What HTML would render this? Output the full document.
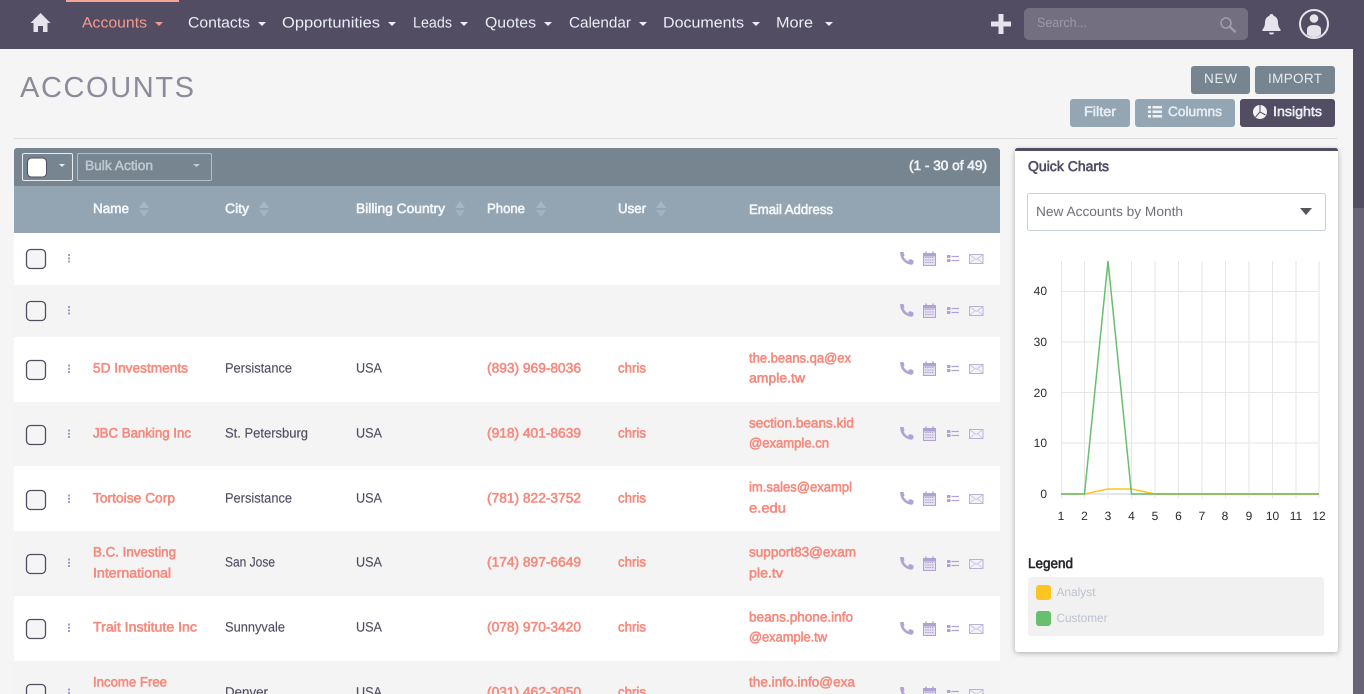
<!DOCTYPE html>
<html lang="en"><head><meta charset="utf-8"><title>Accounts</title>
<style>
html,body{margin:0;padding:0;width:1364px;height:694px;overflow:hidden;background:#f5f5f5}
svg{display:block}
text{font-family:"Liberation Sans",sans-serif;font-size:14px;text-rendering:geometricPrecision}
.nav{font-size:15px;fill:#e9edf5}
.th{font-size:13.5px;fill:#f4f7f9;stroke:#f4f7f9;stroke-width:.6px}
.lnk{font-size:13.5px;fill:#f58a7e;stroke:#f58a7e;stroke-width:.6px}
.td{font-size:13.5px;fill:#534d64;stroke:#534d64;stroke-width:.15px}
.btn{font-size:13.5px;fill:#e6ecf0}
.btb{font-size:13.5px;fill:#e6ecf0;stroke:#e6ecf0;stroke-width:.55px}
.ax{font-size:12px;fill:#2a2a2a}
</style></head><body>
<svg width="1364" height="694" viewBox="0 0 1364 694" xmlns="http://www.w3.org/2000/svg">
<defs>
<path id="car" d="M0 0h8l-4 4z"/>
<g id="sort" fill="#a9b6c2"><path d="M0 7L5 0l5 7z"/><path d="M0 9h10L5 16z" fill="#a5b2be"/></g>
<g id="acts">
 <path d="M901.5 -4.5C902 1 906 5 911.5 5.5" fill="none" stroke="#b0a3d3" stroke-width="2.6" stroke-linecap="round"/>
 <path d="M900 -6h3.5l1 3.500-2 1.500zM908 2.500l2-1.500 3.500 1.500v3h-2.500z" fill="#b0a3d3"/>
 <rect x="923.500" y="-4.500" width="12" height="12" fill="#e6e1f1" stroke="#b0a3d3"/>
 <rect x="923" y="-5" width="13" height="3.500" fill="#b0a3d3"/>
 <path d="M926 -6.500v2M933 -6.500v2" stroke="#b0a3d3" stroke-width="1.500"/>
 <path d="M925 -.5h9M925 2h9M925 4.500h9" stroke="#b0a3d3" stroke-dasharray="1.500 .8"/>
 <rect x="947" y="-3" width="3.500" height="3" fill="#b0a3d3"/><rect x="947" y="1" width="3.500" height="3" fill="#b0a3d3"/>
 <path d="M951.500 -1.500h7.500M951.500 2.500h7.500" stroke="#b0a3d3" stroke-width="1.200"/>
 <rect x="969.500" y="-3.500" width="13.500" height="9" fill="#f4f2f9" stroke="#bcb0da"/>
 <path d="M970 -3l6.300 4.500L982.500 -3M970 5l4.500-4M982.500 5l-4.500-4" fill="none" stroke="#c8bee0" stroke-width=".8"/>
</g>
<g id="dots" fill="#a598cf"><rect x="68" y="-4.500" width="2" height="2"/><rect x="68" y="-1.200" width="2" height="2"/><rect x="68" y="2" width="2" height="2"/></g>
<rect id="cb" x="26.500" y="-9.500" width="19" height="19" rx="4" fill="#f5f5f5" stroke="#534d64" stroke-width="1.300"/>
</defs>

<!-- page -->
<rect width="1364" height="694" fill="#f5f5f5"/>
<rect x="1353" y="49" width="11" height="159" fill="#534d64"/>
<rect x="1353" y="208" width="11" height="486" fill="#686376"/>

<!-- top nav -->
<g>
<rect width="1364" height="49" fill="#534d64"/>
<rect x="66" width="113" height="2" fill="#f4a597"/>
<path d="M40.500 13L50.500 23H47.500V32H43V26H38V32H33.500V23H30.500z" fill="#e6e4ea"/>
<text x="82" y="27.500" class="nav" style="fill:#f39a8d" textLength="65" lengthAdjust="spacingAndGlyphs">Accounts</text>
<use href="#car" x="155" y="22" fill="#f39a8d"/>
<text x="188" y="27.500" class="nav" textLength="62" lengthAdjust="spacingAndGlyphs">Contacts</text>
<use href="#car" x="258" y="22" fill="#e9edf5"/>
<text x="282" y="27.500" class="nav" textLength="98" lengthAdjust="spacingAndGlyphs">Opportunities</text>
<use href="#car" x="388" y="22" fill="#e9edf5"/>
<text x="413" y="27.500" class="nav" textLength="39" lengthAdjust="spacingAndGlyphs">Leads</text>
<use href="#car" x="460" y="22" fill="#e9edf5"/>
<text x="485" y="27.500" class="nav" textLength="51" lengthAdjust="spacingAndGlyphs">Quotes</text>
<use href="#car" x="544" y="22" fill="#e9edf5"/>
<text x="569" y="27.500" class="nav" textLength="62" lengthAdjust="spacingAndGlyphs">Calendar</text>
<use href="#car" x="639" y="22" fill="#e9edf5"/>
<text x="663" y="27.500" class="nav" textLength="81" lengthAdjust="spacingAndGlyphs">Documents</text>
<use href="#car" x="752" y="22" fill="#e9edf5"/>
<text x="776" y="27.500" class="nav" textLength="37" lengthAdjust="spacingAndGlyphs">More</text>
<use href="#car" x="825" y="22" fill="#e9edf5"/>
<path d="M998.500 14h5v7.500h7.500v5h-7.500V34h-5v-7.500H991v-5h7.500z" fill="#e6e4ea"/>
<rect x="1024" y="8" width="224" height="32" rx="5" fill="#736e80"/>
<text x="1037" y="27" style="font-size:13.5px;fill:#9d99a7" textLength="50" lengthAdjust="spacingAndGlyphs">Search...</text>
<circle cx="1226" cy="23" r="5" fill="none" stroke="#a09ca9" stroke-width="1.600"/>
<path d="M1230 27l5 4.500" stroke="#a09ca9" stroke-width="2.400" stroke-linecap="round"/>
<path d="M1271.500 14c1.300 0 2 .8 2 1.800 3 1 4.500 3.500 4.500 6.700 0 3 .8 5 2.500 7v1.500h-18v-1.500c1.700-2 2.500-4 2.500-7 0-3.200 1.500-5.700 4.500-6.700 0-1 .7-1.800 2-1.800z" fill="#e6e4ea"/>
<path d="M1269 32.500h5c0 1.200-1 2-2.500 2s-2.500-.8-2.500-2z" fill="#e6e4ea"/>
<circle cx="1314" cy="24" r="14" fill="none" stroke="#e6e4ea" stroke-width="2"/>
<circle cx="1314" cy="18.500" r="4.300" fill="#e6e4ea"/>
<path d="M1307 34.500v-5c0-3 2.700-4.500 7-4.500s7 1.500 7 4.500v5c-2 1.500-4.400 2.500-7 2.500s-5-1-7-2.500z" fill="#e6e4ea"/>
</g>

<!-- title + actions -->
<g>
<text x="20" y="97" style="font-size:29px;fill:#8b8b9c" textLength="174" lengthAdjust="spacing">ACCOUNTS</text>
<rect x="1191" y="66" width="59" height="28" rx="3" fill="#778591"/>
<text x="1204" y="83" class="btn" textLength="33" lengthAdjust="spacing">NEW</text>
<rect x="1255" y="66" width="80" height="28" rx="3" fill="#778591"/>
<text x="1268" y="83" class="btn" textLength="54" lengthAdjust="spacing">IMPORT</text>
<rect x="1070" y="99" width="60" height="28" rx="3" fill="#94a6b4"/>
<text x="1084" y="116" class="btb" textLength="32" lengthAdjust="spacingAndGlyphs">Filter</text>
<rect x="1135" y="99" width="100" height="28" rx="3" fill="#94a6b4"/>
<path d="M1148 106h3v2.500h-3zM1148 110.500h3v2.500h-3zM1148 115h3v2.500h-3zM1152.500 106h9.500v2.500h-9.500zM1152.500 110.500h9.500v2.500h-9.500zM1152.500 115h9.500v2.500h-9.500z" fill="#eef2f5"/>
<text x="1168" y="116" class="btb" textLength="54" lengthAdjust="spacingAndGlyphs">Columns</text>
<rect x="1240" y="99" width="95" height="28" rx="3" fill="#534d64"/>
<circle cx="1260" cy="112" r="7" fill="#f2f1f4"/>
<path d="M1260 105v7l5.500 3M1260 112l-4.500 5" fill="none" stroke="#534d64" stroke-width="1"/>
<text x="1273" y="116" class="btb" textLength="49" lengthAdjust="spacingAndGlyphs">Insights</text>
<rect x="14" y="138" width="1323" height="1" fill="#dcdcdc"/>
</g>

<!-- table toolbar -->
<g>
<path d="M14 186V151a3 3 0 0 1 3-3H997a3 3 0 0 1 3 3V186z" fill="#778591"/>
<rect x="22.500" y="153.500" width="50" height="27" rx="1.500" fill="none" stroke="#e8ecef"/>
<rect x="27.500" y="158" width="19" height="19" rx="4" fill="#fff" stroke="#534d64"/>
<path d="M59 164h6l-3 3z" fill="#e8ecef"/>
<rect x="77.500" y="153.500" width="134" height="27" rx="1.500" fill="none" stroke="#b5bfc6"/>
<text x="85" y="170" style="font-size:13.5px;fill:#bfc8ce;stroke:#bfc8ce;stroke-width:.5px" textLength="68" lengthAdjust="spacingAndGlyphs">Bulk Action</text>
<path d="M193 164h7l-3.500 3z" fill="#c5cdd3"/>
<text x="909" y="170" style="font-size:13.5px;fill:#f2f5f7;stroke:#f2f5f7;stroke-width:.6px" textLength="78" lengthAdjust="spacingAndGlyphs">(1 - 30 of 49)</text>
</g>

<!-- table head -->
<g>
<rect x="14" y="186" width="986" height="47" fill="#93a4b3"/>
<text x="93" y="213" class="th" textLength="36" lengthAdjust="spacingAndGlyphs">Name</text><use href="#sort" x="139" y="201"/>
<text x="225" y="213" class="th" textLength="24" lengthAdjust="spacingAndGlyphs">City</text><use href="#sort" x="259" y="201"/>
<text x="356" y="213" class="th" textLength="89" lengthAdjust="spacingAndGlyphs">Billing Country</text><use href="#sort" x="455" y="201"/>
<text x="487" y="213" class="th" textLength="38" lengthAdjust="spacingAndGlyphs">Phone</text><use href="#sort" x="536" y="201"/>
<text x="618" y="213" class="th" textLength="28" lengthAdjust="spacingAndGlyphs">User</text><use href="#sort" x="656" y="201"/>
<text x="749" y="214" class="th" textLength="84" lengthAdjust="spacingAndGlyphs">Email Address</text>
</g>

<!-- rows -->
<g>
<rect x="14" y="233" width="986" height="52" fill="#fff"/>
<rect x="14" y="285" width="986" height="52" fill="#f4f4f4"/>
<rect x="14" y="337" width="986" height="65" fill="#fff"/>
<rect x="14" y="402" width="986" height="64" fill="#f4f4f4"/>
<rect x="14" y="466" width="986" height="65" fill="#fff"/>
<rect x="14" y="531" width="986" height="65" fill="#f4f4f4"/>
<rect x="14" y="596" width="986" height="65" fill="#fff"/>
<rect x="14" y="661" width="986" height="33" fill="#f4f4f4"/>

<use href="#cb" y="259"/><use href="#dots" y="258.500"/><use href="#acts" y="258"/>
<use href="#cb" y="311"/><use href="#dots" y="310.500"/><use href="#acts" y="310"/>

<use href="#cb" y="370"/><use href="#dots" y="369"/><use href="#acts" y="368"/>
<text x="93" y="372.500" class="lnk" textLength="95" lengthAdjust="spacingAndGlyphs">5D Investments</text>
<text x="225" y="372.500" class="td" textLength="67" lengthAdjust="spacingAndGlyphs">Persistance</text>
<text x="356" y="372.500" class="td" textLength="26" lengthAdjust="spacingAndGlyphs">USA</text>
<text x="487" y="372.500" class="lnk" textLength="94" lengthAdjust="spacingAndGlyphs">(893) 969-8036</text>
<text x="618" y="372.500" class="lnk" textLength="28" lengthAdjust="spacingAndGlyphs">chris</text>
<text x="749" y="362.500" class="lnk" textLength="102" lengthAdjust="spacingAndGlyphs">the.beans.qa@ex</text>
<text x="749" y="382.500" class="lnk" textLength="56" lengthAdjust="spacingAndGlyphs">ample.tw</text>

<use href="#cb" y="435"/><use href="#dots" y="434"/><use href="#acts" y="433"/>
<text x="93" y="437.500" class="lnk" textLength="98" lengthAdjust="spacingAndGlyphs">JBC Banking Inc</text>
<text x="225" y="437.500" class="td" textLength="83" lengthAdjust="spacingAndGlyphs">St. Petersburg</text>
<text x="356" y="437.500" class="td" textLength="26" lengthAdjust="spacingAndGlyphs">USA</text>
<text x="487" y="437.500" class="lnk" textLength="94" lengthAdjust="spacingAndGlyphs">(918) 401-8639</text>
<text x="618" y="437.500" class="lnk" textLength="28" lengthAdjust="spacingAndGlyphs">chris</text>
<text x="749" y="427.500" class="lnk" textLength="105" lengthAdjust="spacingAndGlyphs">section.beans.kid</text>
<text x="749" y="447.500" class="lnk" textLength="80" lengthAdjust="spacingAndGlyphs">@example.cn</text>

<use href="#cb" y="500"/><use href="#dots" y="499"/><use href="#acts" y="498"/>
<text x="93" y="502.500" class="lnk" textLength="82" lengthAdjust="spacingAndGlyphs">Tortoise Corp</text>
<text x="225" y="502.500" class="td" textLength="67" lengthAdjust="spacingAndGlyphs">Persistance</text>
<text x="356" y="502.500" class="td" textLength="26" lengthAdjust="spacingAndGlyphs">USA</text>
<text x="487" y="502.500" class="lnk" textLength="94" lengthAdjust="spacingAndGlyphs">(781) 822-3752</text>
<text x="618" y="502.500" class="lnk" textLength="28" lengthAdjust="spacingAndGlyphs">chris</text>
<text x="749" y="491.500" class="lnk" textLength="103" lengthAdjust="spacingAndGlyphs">im.sales@exampl</text>
<text x="749" y="512.500" class="lnk" textLength="37" lengthAdjust="spacingAndGlyphs">e.edu</text>

<use href="#cb" y="564"/><use href="#dots" y="563"/><use href="#acts" y="563"/>
<text x="93" y="556.500" class="lnk" textLength="83" lengthAdjust="spacingAndGlyphs">B.C. Investing</text>
<text x="93" y="577.500" class="lnk" textLength="78" lengthAdjust="spacingAndGlyphs">International</text>
<text x="225" y="566.500" class="td" textLength="50" lengthAdjust="spacingAndGlyphs">San Jose</text>
<text x="356" y="566.500" class="td" textLength="26" lengthAdjust="spacingAndGlyphs">USA</text>
<text x="487" y="566.500" class="lnk" textLength="94" lengthAdjust="spacingAndGlyphs">(174) 897-6649</text>
<text x="618" y="566.500" class="lnk" textLength="28" lengthAdjust="spacingAndGlyphs">chris</text>
<text x="749" y="556.500" class="lnk" textLength="107" lengthAdjust="spacingAndGlyphs">support83@exam</text>
<text x="749" y="577.500" class="lnk" textLength="34" lengthAdjust="spacingAndGlyphs">ple.tv</text>

<use href="#cb" y="629"/><use href="#dots" y="628"/><use href="#acts" y="628"/>
<text x="93" y="631.500" class="lnk" textLength="104" lengthAdjust="spacingAndGlyphs">Trait Institute Inc</text>
<text x="225" y="631.500" class="td" textLength="60" lengthAdjust="spacingAndGlyphs">Sunnyvale</text>
<text x="356" y="631.500" class="td" textLength="26" lengthAdjust="spacingAndGlyphs">USA</text>
<text x="487" y="631.500" class="lnk" textLength="94" lengthAdjust="spacingAndGlyphs">(078) 970-3420</text>
<text x="618" y="631.500" class="lnk" textLength="28" lengthAdjust="spacingAndGlyphs">chris</text>
<text x="749" y="621.500" class="lnk" textLength="104" lengthAdjust="spacingAndGlyphs">beans.phone.info</text>
<text x="749" y="641.500" class="lnk" textLength="78" lengthAdjust="spacingAndGlyphs">@example.tw</text>

<use href="#cb" y="694"/><use href="#dots" y="693"/><use href="#acts" y="693"/>
<text x="93" y="686.500" class="lnk" textLength="74" lengthAdjust="spacingAndGlyphs">Income Free</text>
<text x="225" y="696.500" class="td" textLength="43" lengthAdjust="spacingAndGlyphs">Denver</text>
<text x="356" y="696.500" class="td" textLength="26" lengthAdjust="spacingAndGlyphs">USA</text>
<text x="487" y="696.500" class="lnk" textLength="94" lengthAdjust="spacingAndGlyphs">(031) 462-3050</text>
<text x="618" y="696.500" class="lnk" textLength="28" lengthAdjust="spacingAndGlyphs">chris</text>
<text x="749" y="686.500" class="lnk" textLength="106" lengthAdjust="spacingAndGlyphs">the.info.info@exa</text>
</g>

<!-- quick charts card -->
<g>
<rect x="1015" y="149" width="323" height="503" rx="3" fill="#fff" style="filter:drop-shadow(0 1px 3px rgba(0,0,0,.3))"/>
<path d="M1015 151v-.5a2.500 2.500 0 0 1 2.500-2.500H1335.500a2.500 2.500 0 0 1 2.500 2.500v.5z" fill="#534d64"/>
<text x="1028" y="171" style="font-size:14px;fill:#534d64;stroke:#534d64;stroke-width:.6px" textLength="81" lengthAdjust="spacingAndGlyphs">Quick Charts</text>
<rect x="1027.500" y="193.500" width="298" height="37" rx="2" fill="#fff" stroke="#c8d1d8"/>
<text x="1036" y="216" style="font-size:13.500px;fill:#6f6f7b" textLength="147" lengthAdjust="spacingAndGlyphs">New Accounts by Month</text>
<path d="M1300 208h12l-6 7z" fill="#54545c"/>

<!-- chart grid -->
<path d="M1061.500 261V498M1084.500 261V498M1108 261V498M1131.500 261V498M1155 261V498M1178.500 261V498M1202 261V498M1225.500 261V498M1249 261V498M1272.500 261V498M1296 261V498M1319 261V498" stroke="#e6e6e6" stroke-width="1"/>
<path d="M1061 291.500H1319M1061 342H1319M1061 392.500H1319M1061 443H1319" stroke="#e6e6e6" stroke-width="1"/>
<path d="M1061 494H1319" stroke="#e6e6e6" stroke-width="2"/>
<polyline points="1061,494 1084.500,494 1108,489 1131.500,489 1155,494 1319,494" fill="none" stroke="#fdc51f" stroke-width="1.500"/>
<polyline points="1061,494 1084.500,494 1108,261 1131.500,494 1155,494 1319,494" fill="none" stroke="#68bf6e" stroke-width="1.500"/>
<path d="M1155 494H1319" stroke="#85bd5c" stroke-width="1.500"/>
<text x="1047" y="295" class="ax" text-anchor="end">40</text>
<text x="1047" y="346" class="ax" text-anchor="end">30</text>
<text x="1047" y="397" class="ax" text-anchor="end">20</text>
<text x="1047" y="447" class="ax" text-anchor="end">10</text>
<text x="1047" y="498" class="ax" text-anchor="end">0</text>
<g text-anchor="middle">
<text x="1061" y="520" class="ax">1</text><text x="1084.500" y="520" class="ax">2</text><text x="1108" y="520" class="ax">3</text><text x="1131.500" y="520" class="ax">4</text><text x="1155" y="520" class="ax">5</text><text x="1178.500" y="520" class="ax">6</text><text x="1202" y="520" class="ax">7</text><text x="1225" y="520" class="ax">8</text><text x="1249" y="520" class="ax">9</text><text x="1272.500" y="520" class="ax">10</text><text x="1296" y="520" class="ax">11</text><text x="1319" y="520" class="ax">12</text>
</g>
<text x="1028" y="568" style="font-size:14px;fill:#26262e;stroke:#26262e;stroke-width:.6px" textLength="45" lengthAdjust="spacingAndGlyphs">Legend</text>
<rect x="1028" y="577" width="296" height="59" rx="3" fill="#f1f1f1"/>
<rect x="1036" y="585" width="15" height="15" rx="3" fill="#fdc51f"/>
<text x="1056.500" y="596" style="font-size:12px;fill:#bcc2d0" textLength="39" lengthAdjust="spacingAndGlyphs">Analyst</text>
<rect x="1036" y="611" width="15" height="15" rx="3" fill="#68bf6e"/>
<text x="1056.500" y="622" style="font-size:12px;fill:#bcc2d0" textLength="51" lengthAdjust="spacingAndGlyphs">Customer</text>
</g>
</svg>
</body></html>
